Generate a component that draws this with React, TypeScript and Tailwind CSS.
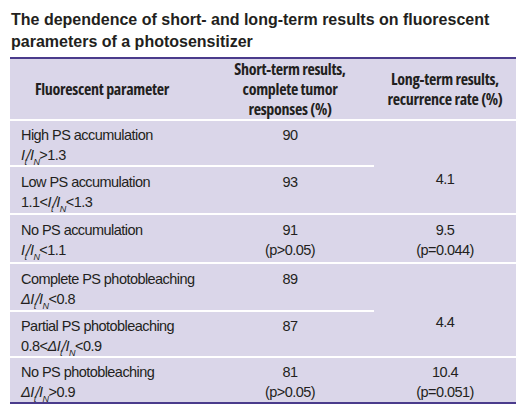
import React from "react";

const body = {
  fontFamily: '"Liberation Sans", Arial, sans-serif',
  letterSpacing: "-0.55px",
};
const head = {
  fontFamily: '"Open Sans", "Liberation Sans", sans-serif',
  fontStretch: "75%",
  letterSpacing: "-0.3px",
};

function It({ base, sub }: { base: string; sub: string }) {
  return (
    <span>
      <i>{base}</i>
      <sub className="text-[9px] italic align-[-3px]">{sub}</sub>
    </span>
  );
}

function Ratio({ delta }: { delta?: boolean }) {
  return (
    <span>
      {delta ? <i>Δ</i> : null}
      <It base="I" sub="t" />
      <i>/</i>
      <It base="I" sub="N" />
    </span>
  );
}

const line = "border-b-2 border-white";
const c1 = "pl-[11px] pr-1 text-left align-top";
const cc = "px-1 text-center align-top";
const th = "border-t-2 border-t-[#4a3b8c] border-b-2 border-b-white text-center font-bold leading-[20px] align-middle";

export default function App() {
  return (
    <div className="w-[525px] h-[420px] bg-white text-[#231f20]">
      <div
        className="pl-[11px] pt-[9px] text-[16px] font-bold leading-[22px] h-[57px]"
        style={{ fontFamily: '"Liberation Sans", Arial, sans-serif' }}
      >
        The dependence of short- and long-term results on fluorescent
        <br />
        parameters of a photosensitizer
      </div>
      <div className="px-[10px]">
        <table
          className="w-[506px] border-separate border-spacing-0 bg-[#dad6e9] text-[14.5px] leading-[20px] table-fixed"
          style={body}
        >
          <colgroup>
            <col className="w-[196px]" />
            <col className="w-[168px]" />
            <col className="w-[142px]" />
          </colgroup>
          <thead style={head} className="text-[16px]">
            <tr>
              <th className={`${th} h-[64px] pr-[12px]`}>Fluorescent parameter</th>
              <th className={th}>
                Short-term results,
                <br />
                complete tumor
                <br />
                responses (%)
              </th>
              <th className={th}>
                Long-term results,
                <br />
                recurrence rate (%)
              </th>
            </tr>
          </thead>
          <tbody>
            <tr>
              <td className={`${c1} ${line} h-[46px] pt-[4px]`}>
                High PS accumulation
                <br />
                <Ratio />
                &gt;1.3
              </td>
              <td className={`${cc} ${line} pt-[4px]`}>90</td>
              <td rowSpan={2} className={`${line} text-center align-middle pt-[24px]`}>
                4.1
              </td>
            </tr>
            <tr>
              <td className={`${c1} ${line} h-[48px] pt-[5px]`}>
                Low PS accumulation
                <br />
                1.1&lt;
                <Ratio />
                &lt;1.3
              </td>
              <td className={`${cc} ${line} pt-[5px]`}>93</td>
            </tr>
            <tr>
              <td className={`${c1} ${line} h-[49px] pt-[5px]`}>
                No PS accumulation
                <br />
                <Ratio />
                &lt;1.1
              </td>
              <td className={`${cc} ${line} pt-[5px]`}>
                91
                <br />
                (p&gt;0.05)
              </td>
              <td className={`${cc} ${line} pt-[5px]`}>
                9.5
                <br />
                (p=0.044)
              </td>
            </tr>
            <tr>
              <td className={`${c1} ${line} h-[48px] pt-[5px]`}>
                Complete PS photobleaching
                <br />
                <Ratio delta />
                &lt;0.8
              </td>
              <td className={`${cc} ${line} pt-[5px]`}>89</td>
              <td rowSpan={2} className={`${line} text-center align-middle pt-[24px]`}>
                4.4
              </td>
            </tr>
            <tr>
              <td className={`${c1} ${line} h-[45px] pt-[4px]`}>
                Partial PS photobleaching
                <br />
                0.8&lt;
                <Ratio delta />
                &lt;0.9
              </td>
              <td className={`${cc} ${line} pt-[4px]`}>87</td>
            </tr>
            <tr>
              <td className={`${c1} h-[46px] pt-[4px] border-b-2 border-[#4a3b8c]`}>
                No PS photobleaching
                <br />
                <Ratio delta />
                &gt;0.9
              </td>
              <td className={`${cc} pt-[4px] border-b-2 border-[#4a3b8c]`}>
                81
                <br />
                (p&gt;0.05)
              </td>
              <td className={`${cc} pt-[4px] border-b-2 border-[#4a3b8c]`}>
                10.4
                <br />
                (p=0.051)
              </td>
            </tr>
          </tbody>
        </table>
      </div>
    </div>
  );
}
